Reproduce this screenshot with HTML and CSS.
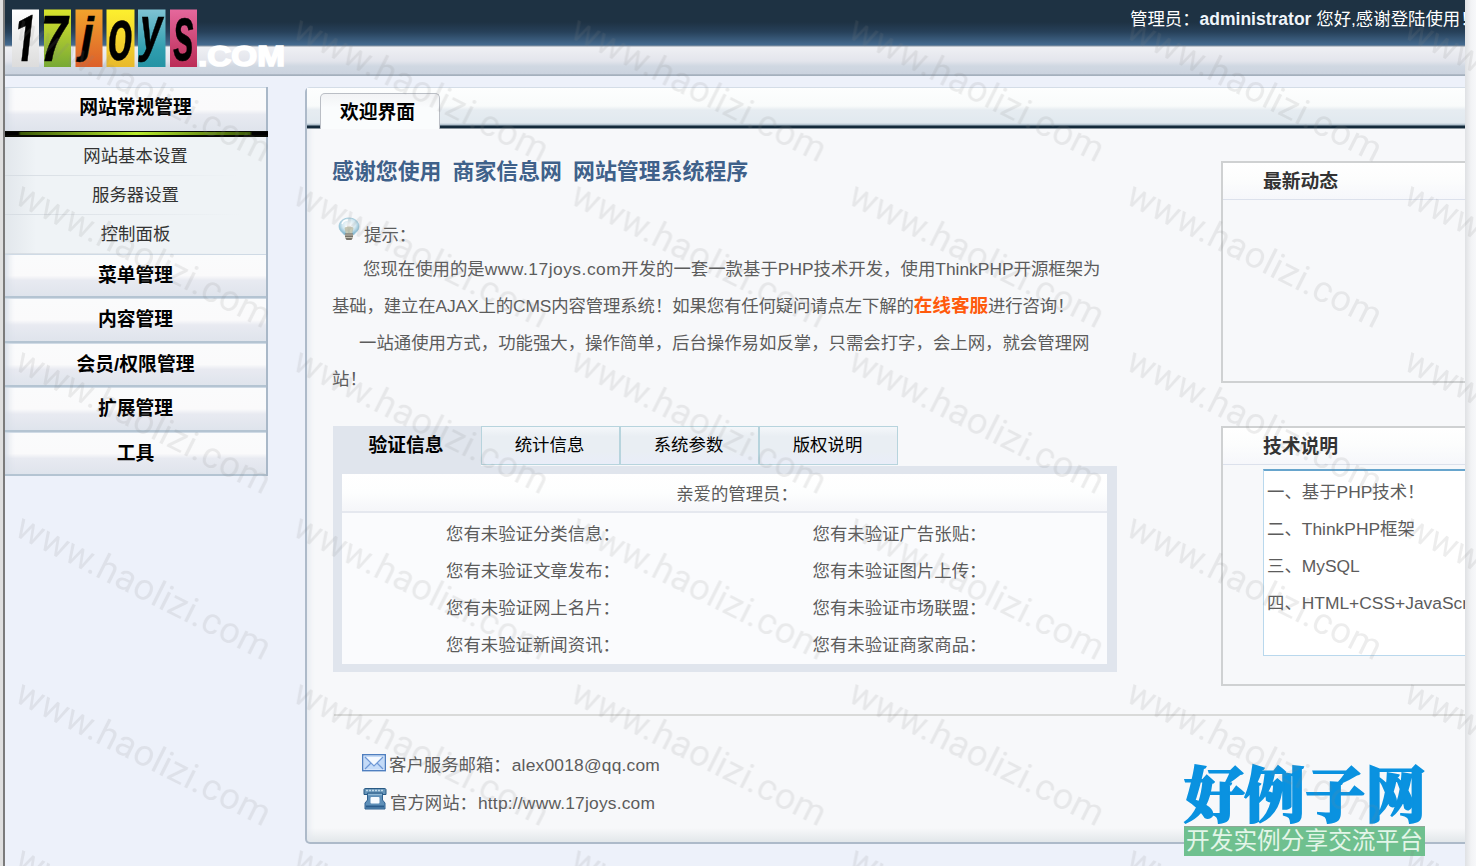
FILE: index.html
```html
<!DOCTYPE html>
<html lang="zh-CN">
<head>
<meta charset="utf-8">
<title>网站管理系统</title>
<link rel="stylesheet" href="styles.css">
</head>
<body>
<div class="window">
  <div class="edge-left"></div>
  <div class="app">
    <header class="header">
      <svg class="logo" width="290" height="76" viewBox="5 0 290 76">
        <defs>
          <linearGradient id="t1" x1="0" y1="0" x2="0" y2="1"><stop offset="0" stop-color="#fff"/><stop offset="1" stop-color="#dcdcdc"/></linearGradient>
          <linearGradient id="t2" x1="0" y1="0" x2="0" y2="1"><stop offset="0" stop-color="#d9e32c"/><stop offset="1" stop-color="#77a935"/></linearGradient>
          <linearGradient id="t3" x1="0" y1="0" x2="0" y2="1"><stop offset="0" stop-color="#f2a32c"/><stop offset="1" stop-color="#dc5f2a"/></linearGradient>
          <linearGradient id="t4" x1="0" y1="0" x2="0" y2="1"><stop offset="0" stop-color="#fdf02e"/><stop offset="1" stop-color="#e9b92c"/></linearGradient>
          <linearGradient id="t5" x1="0" y1="0" x2="0" y2="1"><stop offset="0" stop-color="#7fc3d3"/><stop offset=".7" stop-color="#2f9dae"/><stop offset="1" stop-color="#2593a4"/></linearGradient>
          <linearGradient id="t6" x1="0" y1="0" x2="0" y2="1"><stop offset="0" stop-color="#e5689c"/><stop offset="1" stop-color="#bb2c57"/></linearGradient>
        </defs>
        <rect x="12" y="9.500" width="27" height="57.500" fill="url(#t1)"/>
        <rect x="44" y="9.500" width="27" height="57.500" fill="url(#t2)"/>
        <rect x="75.500" y="9.500" width="27" height="57.500" fill="url(#t3)"/>
        <rect x="106.500" y="9.500" width="28" height="57.500" fill="url(#t4)"/>
        <rect x="138" y="9.500" width="27.500" height="57.500" fill="url(#t5)"/>
        <rect x="170" y="9.500" width="27" height="57.500" fill="url(#t6)"/>
        <g class="logo-letters">
          <text class="logo-one" transform="translate(13.500 61) scale(.66 1)" font-size="64">1</text>
          <text transform="translate(40.500 61) scale(.76 1)" font-size="64">7</text>
          <text transform="translate(81 52) scale(.92 1)" font-size="50">j</text>
          <text transform="translate(108 59.500) scale(.54 1)" font-size="75">o</text>
          <text transform="translate(140 48.500) scale(.66 1)" font-size="61">y</text>
          <text transform="translate(173 60) scale(.5 1)" font-size="77">s</text>
        </g>
        <text class="logo-com" x="198" y="65.600" textLength="87" lengthAdjust="spacingAndGlyphs">.COM</text>
      </svg>
      <div class="greeting">管理员：<b>administrator</b> 您好,感谢登陆使用！</div>
    </header>

    <div class="columns">
      <nav class="sidebar">
        <div class="group first">网站常规管理</div>
        <div class="marker"></div>
        <div class="item">网站基本设置</div>
        <div class="item">服务器设置</div>
        <div class="item">控制面板</div>
        <div class="group">菜单管理</div>
        <div class="group">内容管理</div>
        <div class="group">会员/权限管理</div>
        <div class="group">扩展管理</div>
        <div class="group">工具</div>
      </nav>

      <main class="panel">
        <div class="tabbar"><div class="tab">欢迎界面</div></div>
        <div class="content">
          <section class="primary">
            <h1>感谢您使用 商家信息网 网站管理系统程序</h1>
            <div class="tip">
              <svg width="22" height="24" viewBox="0 0 22 24">
                <defs><radialGradient id="bulb" cx=".5" cy=".4" r=".6"><stop offset="0" stop-color="#fff"/><stop offset=".55" stop-color="#d4e8f0"/><stop offset="1" stop-color="#78b0cb"/></radialGradient></defs>
                <path d="M11 1C5 1 1 5 1 9.500c0 4 3 5.500 5.500 8.500h9C18 15 21 13.500 21 9.500 21 5 17 1 11 1z" fill="url(#bulb)" stroke="#9cc6d8" stroke-width=".8"/>
                <path d="M4 7c1-3 4-4 6-4M7.500 9.500h7M9 10v6M13 10v6" fill="none" stroke="#fff" stroke-width="1.300"/>
                <path d="M6.500 11c2-2 7-2 9 0l-1.500 6H8z" fill="#b9b89a" opacity=".7"/>
                <path d="M7 16.500h8v4L13.500 23h-5L7 20.500z" fill="#77736a"/>
                <path d="M7 18h8M7 20.500h8" stroke="#d6d2c3" stroke-width=".8"/>
              </svg>
              <span>提示：</span>
            </div>
            <p class="line in-a">您现在使用的是<span class="host">www.17joys.com</span>开发的一套一款基于PHP技术开发，使用ThinkPHP开源框架为</p>
            <p class="line tight">基础，建立在AJAX上的CMS内容管理系统！如果您有任何疑问请点左下解的<b class="hot">在线客服</b>进行咨询！</p>
            <p class="line in-b">一站通使用方式，功能强大，操作简单，后台操作易如反掌，只需会打字，会上网，就会管理网</p>
            <p class="line last">站！</p>

            <div class="subtabs">
              <div class="subtab active">验证信息</div>
              <div class="subtab">统计信息</div>
              <div class="subtab">系统参数</div>
              <div class="subtab">版权说明</div>
            </div>
            <div class="report">
              <div class="report-head">亲爱的管理员：</div>
              <div class="report-grid">
                <span>您有未验证分类信息：</span><span>您有未验证广告张贴：</span>
                <span>您有未验证文章发布：</span><span>您有未验证图片上传：</span>
                <span>您有未验证网上名片：</span><span>您有未验证市场联盟：</span>
                <span>您有未验证新闻资讯：</span><span>您有未验证商家商品：</span>
              </div>
            </div>
          </section>

          <aside class="aside">
            <div class="box news"><h2>最新动态</h2></div>
            <div class="box tech">
              <h2>技术说明</h2>
              <div class="notes">
                <div>一、基于PHP技术！</div>
                <div>二、ThinkPHP框架</div>
                <div>三、MySQL</div>
                <div>四、HTML+CSS+JavaScript</div>
              </div>
            </div>
          </aside>
        </div>
        <div class="contact">
          <div class="contact-row">
            <svg width="24" height="18" viewBox="0 0 24 18">
              <rect x=".7" y=".7" width="22.600" height="16" fill="#e9f2fd" stroke="#4f7fc0" stroke-width="1.400"/>
              <path d="M2 15.500V2h20v13.500z" fill="#c4dbf8"/>
              <path d="M3 3l9 9 9-9z" fill="#f4f9ff"/>
              <path d="M3 3l9 9 9-9M3 15l6-6M21 15l-6-6" fill="none" stroke="#6f99d6" stroke-width="1.200"/>
            </svg>
            <span>客户服务邮箱：<span class="latin">alex0018@qq.com</span></span>
          </div>
          <div class="contact-row phone">
            <svg width="24" height="22" viewBox="0 0 24 22">
              <path d="M1 1.500Q1 .5 3 .5h18q2 0 2 1v5h-3.500V5h-15v1.500H1z" fill="#6695b9" stroke="#285983"/>
              <path d="M3 2.500h18" stroke="#bed8e8" stroke-width="1.500" stroke-dasharray="2 1"/>
              <path d="M4.500 5.500h15V12l2.500 3v6H2v-6l2.500-3z" fill="#5e8fb8" stroke="#2f6190"/>
              <path d="M3 18.500h18" stroke="#2b5c8c" stroke-width="2"/>
              <path d="M5 6.500h14" stroke="#8fb8d4" stroke-width="1.500"/>
              <rect x="7.500" y="9" width="9" height="6.500" rx="1" fill="#f6fbff"/>
            </svg>
            <span>官方网站：<span class="latin">http://www.17joys.com</span></span>
          </div>
        </div>
      </main>
    </div>
  </div>
  <div class="edge-right"></div>
</div>

<div class="brand">
  <div class="brand-name">好例子网</div>
  <div class="brand-tag">开发实例分享交流平台</div>
</div>

<svg class="watermark" width="1476" height="866">
  <defs>
    <pattern id="wm" x="8" y="10" width="277.800" height="166" patternUnits="userSpaceOnUse">
      <text transform="translate(5 27) rotate(26.700)" textLength="280" lengthAdjust="spacing">www.haolizi.com</text>
    </pattern>
  </defs>
  <rect width="1476" height="866" fill="url(#wm)"/>
</svg>
</body>
</html>
```
FILE: styles.css
```css
* { box-sizing: border-box; }
body {
  margin: 0;
  width: 1476px;
  height: 866px;
  overflow: hidden;
  position: relative;
  background: #edf1fa;
  color: #5c5c5c;
  font: 17.4px/37px "Liberation Sans", "Noto Sans CJK SC", sans-serif;
}
h1, h2, p { margin: 0; }
.window { display: flex; height: 866px; }
.edge-left {
  width: 5px;
  flex: none;
  background: #dfdfdf;
  border-right: 2px solid #7b7b7b;
}
.app { width: 1460px; flex: none; overflow: hidden; }
.edge-right {
  width: 11px;
  background: linear-gradient(90deg, #dfe1e4, #f2f3f5 55%, #f7f8fa);
}

.header {
  height: 76px;
  display: flex;
  justify-content: space-between;
  background:
    linear-gradient(#1e3243 0 22px, #27415a 32px, #456b90 45px, #8b97a5 46px, #eff0f4 47px, #e3e5ec 61px, #d0d8e2 66px, #cbd3df 74px, #929eab 75px, #b7c3d0 76px);
}
.logo { display: block; flex: none; }
.logo-letters {
  font-family: "Liberation Sans", sans-serif;
  font-weight: bold;
  font-style: italic;
  fill: #000;
  stroke: #000;
  stroke-width: .5px;
}
.logo-one { font-family: Roboto, sans-serif; }
.logo-com { font: bold 29px "Liberation Sans", sans-serif; fill: #fff; stroke: #fff; stroke-width: 1.6px; }
.greeting {
  width: 335px;
  flex: none;
  white-space: nowrap;
  color: #fff;
  line-height: 39px;
}
.greeting b { color: #eef4fa; font-size: 17.5px; }

.columns { display: flex; padding-top: 11px; }
.sidebar {
  width: 263px;
  height: 389px;
  flex: none;
  border-right: 2px solid #a9b8c8;
  text-align: center;
  color: #333;
}
.group {
  height: 44.400px;
  line-height: 42px;
  font-size: 18.800px;
  font-weight: bold;
  color: #000;
  border-top: 1px solid #cfdae5;
  border-bottom: 2px solid #b4c4d2;
  background: linear-gradient(#fafbfc, #fafafb 50%, #e8eaf1 62%, #dfe4ec);
  box-shadow: inset 10px 0 7px -7px #d5dce7;
}
.group.first { height: 44px; line-height: 39px; border-bottom: 0; }
.marker {
  height: 6px;
  border: solid #080a04;
  border-width: 1px 0 2px;
  margin-right: -2px;
  background: linear-gradient(90deg, #000 5%, #3c5a08 6%, #b9ec2d 50%, #3c5a08 93%, #000 94%);
}
.item {
  height: 39px;
  line-height: 39px;
  background:
    linear-gradient(90deg, #d7dde3, transparent 90%) bottom / 100% 1px no-repeat,
    linear-gradient(90deg, #e2e7ec, #eff3f6 12%);
}

.panel {
  width: 1170px;
  height: 757px;
  flex: none;
  margin-left: 37px;
  border: 2px solid #adbac9;
  border-top: 1px solid #d4dde7;
  border-radius: 5px 0 0 5px;
  background: linear-gradient(#f7f8fa 0 740px, #e1e6e9 755px);
  box-shadow: inset 6px 0 6px -4px #e4e9ef;
}
.tabbar {
  height: 41px;
  padding: 5px 0 0 13px;
  background: linear-gradient(#fdfefe, #f9fbfb 18px, #e6ecf1 22px, #e1e9ef 35px, #a9bac7 37px, #142a3b 38px 40px, #fff 41px);
}
.tab {
  width: 120px;
  height: 36px;
  padding-left: 19px;
  line-height: 37px;
  font-size: 18.800px;
  font-weight: bold;
  color: #000;
  background: linear-gradient(#f2f3f5, #fafcfd 40%);
  border: 1px solid #babec5;
  border-bottom: 0;
  border-radius: 5px 5px 0 0;
}
.content {
  display: flex;
  justify-content: space-between;
  width: 1158px;
  height: 585px;
}
.primary { width: 810px; padding-left: 25px; }
h1 {
  margin: 28px 0 28px;
  font-size: 21.900px;
  line-height: 30px;
  color: #3f618a;
  word-spacing: 5px;
  white-space: nowrap;
}
.tip { display: flex; gap: 4px; height: 36px; padding-left: 6px; }
.tip svg { margin-top: 2px; }
.tip span { line-height: 41px; }
.line { height: 37px; white-space: nowrap; }
.in-a { padding-left: 31px; line-height: 36px; }
.in-b { padding-left: 27px; }
.line.tight { letter-spacing: -.13px; line-height: 35px; }
.line.last { line-height: 34px; }
.host { letter-spacing: .5px; }
.hot { color: #ff5a0c; font-size: 18.700px; }
.subtabs { display: flex; height: 40px; margin: 27px 0 0 1px; color: #000; }
.subtab {
  width: 139px;
  height: 39px;
  padding-right: 2px;
  text-align: center;
  line-height: 37px;
  border: 1px solid #b7d4dd;
  background: linear-gradient(#f4f7fa, #e9eef3 25%, #e9eef3 65%, #e9edf8);
}
.subtab.active {
  width: 148px;
  height: 40px;
  line-height: 39px;
  font-size: 18.800px;
  font-weight: bold;
  border: 0;
  background: #e0e5ed;
}
.report {
  margin-left: 1px;
  width: 784px;
  height: 206px;
  border: solid #e0e5ed;
  border-width: 8px 10px 8px 9px;
  background: #fafbfd;
}
.report-head {
  height: 39px;
  line-height: 40px;
  padding-left: 25px;
  text-align: center;
  border-bottom: 2px solid #e5e8ef;
  background: linear-gradient(#fff, #fdfefe 50%, #f5f6f9);
}
.report-grid { display: grid; grid-template-columns: 366.500px auto; padding: 3px 0 0 104px; }

.aside { width: 244px; padding-top: 32px; }
.box { width: 252px; border: 2px solid #cfd1d2; }
.news { height: 222px; }
.tech { height: 260px; margin-top: 43px; }
h2 {
  height: 37px;
  padding-left: 40px;
  font-size: 18.800px;
  line-height: 37px;
  color: #333;
  border-bottom: 1px solid #dce1ec;
  background: linear-gradient(#fff, #fcfdfd 45%, #f6f7fb);
}
.notes {
  height: 187px;
  margin: 4px 0 0 40px;
  padding: 3px 0 0 3px;
  white-space: nowrap;
  background: #fff;
  border: 1px solid #b9d8ed;
  border-top: 2px solid #67a5cd;
}

.contact {
  margin-left: 27px;
  padding: 30px 0 0 28px;
  border-top: 2px solid #d9dad9;
}
.contact-row { display: flex; gap: 3px; height: 38px; line-height: 38px; }
.contact-row svg { margin-top: 8px; }
.contact-row.phone { padding-left: 1px; }
.contact-row.phone svg { margin-top: 4px; }
.latin { margin-left: 1px; letter-spacing: .2px; }

.brand { position: absolute; left: 1184px; top: 760px; width: 241px; }
.brand-name {
  height: 66px;
  font: 900 60.500px/62px "Noto Serif CJK SC", "Noto Sans CJK SC", serif;
  color: #0a92e0;
  -webkit-text-stroke: 1.8px #0a92e0;
  white-space: nowrap;
}
.brand-tag {
  height: 30px;
  padding-left: 2px;
  font-size: 23.700px;
  line-height: 28px;
  color: #e3f5e8;
  background: #6fc08f;
  border-top: 1px solid #8ea897;
  white-space: nowrap;
}
.watermark { position: absolute; left: 0; top: 0; pointer-events: none; }
.watermark text { font: 36.5px Roboto, sans-serif; fill: #808080; fill-opacity: .145; }
```
